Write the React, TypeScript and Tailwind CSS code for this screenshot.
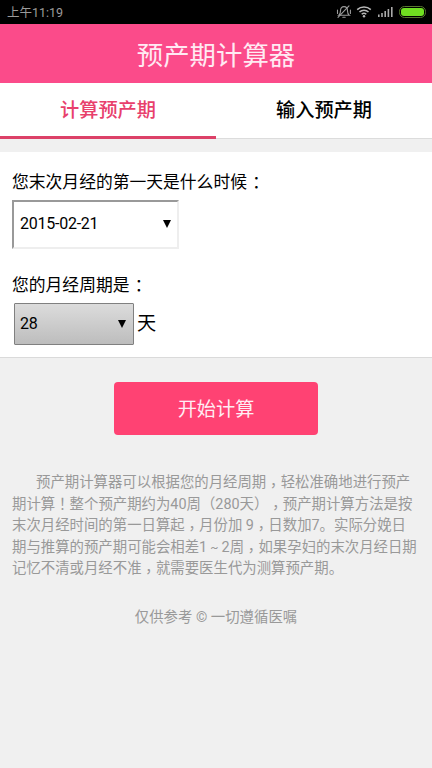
import React from "react";

// Full-width punctuation centred in its em box.
function P({ children }: { children: React.ReactNode }) {
  return <span lang="zh-TW" className="font-['Noto_Sans_CJK_TC',sans-serif] leading-none">{children}</span>;
}

// Commas sit nearer the baseline than the font draws them.
function Low({ children }: { children: React.ReactNode }) {
  return <span lang="zh-TW" className="relative top-1 font-['Noto_Sans_CJK_TC',sans-serif] leading-none">{children}</span>;
}

function Colon() {
  return <span lang="zh-TW" className="relative left-px top-px font-['Noto_Sans_CJK_TC',sans-serif] leading-none">：</span>;
}

function StatusIcons() {
  return (
    <svg width="96" height="24" viewBox="0 0 96 24" fill="none" className="shrink-0">
      <g stroke="#9b9b9b" strokeWidth="1.1" strokeLinecap="round">
        <path d="M2.800 15.300c1.300-.9 1.700-1.900 1.700-4.500C4.500 8 5.900 6.600 8 6.600s3.500 1.400 3.500 4.200c0 2.600.4 3.600 1.700 4.500H2.800Z" />
        <path d="M6.800 17.300h2.400M2 17.300 13 5.800M1.500 10v3.400M14.400 10v3.400" />
      </g>
      <g stroke="#b8b8b8" strokeWidth="1.5">
        <path d="M21.200 9.600a10 10 0 0 1 13.600 0" />
        <path d="M23.500 12a6.500 6.500 0 0 1 9 0" />
        <path d="M25.700 14.300a3.400 3.400 0 0 1 4.600 0" />
      </g>
      <circle cx="28" cy="16.200" r="1.200" fill="#b8b8b8" />
      <path d="M42.800 14.500v2.500M46 13v4M49.200 11v6M52.400 9v8M55.800 7v10" stroke="#aaa" strokeWidth="1.600" />
      <rect x="63.500" y="6.500" width="26" height="11" rx="5" stroke="#58792f" />
      <rect x="65" y="8" width="23" height="8" rx="3" fill="#70df20" />
    </svg>
  );
}

function Arrow() {
  return (
    <svg width="8" height="8" viewBox="0 0 8 8" className="mb-px">
      <path d="M0 0h8L4 8Z" fill="#000" />
    </svg>
  );
}

export default function App() {
  return (
    <div lang="zh-CN" className="flex h-[768px] w-[432px] flex-col overflow-hidden bg-[#f0f0f0] font-[Roboto,'Noto_Sans_CJK_SC',sans-serif] text-black [text-spacing-trim:space-all]">
      <div className="flex h-6 shrink-0 items-center justify-between bg-black pl-[7px]">
        <span className="pt-px text-[12.5px] leading-6 text-[#9b9b9b]">上午11:19</span>
        <StatusIcons />
      </div>
      <header className="flex h-[59px] shrink-0 items-center justify-center bg-[#fb4b8a]">
        <h1 className="pt-[5px] text-[26.4px] leading-[54px] text-[#ffeaf3]">预产期计算器</h1>
      </header>
      <nav className="grid h-14 shrink-0 grid-cols-2 bg-white text-center text-[19.2px] font-medium leading-[56px]">
        <div className="h-14 border-b-[3px] border-[#dc4168] text-[#e8406c]">计算预产期</div>
        <div className="h-14 border-b border-[#dcdcdc]">输入预产期</div>
      </nav>
      <main className="flex flex-col">
        <section className="mt-[13px] flex h-[206px] flex-col border-b border-[#dadada] bg-white px-3">
          <label className="mt-[18px] h-[30px] text-[16.8px] leading-[25px]">您末次月经的第一天是什么时候<Colon /></label>
          <div className="flex h-[49px] w-[167px] items-center justify-between border-2 border-b-[#eee] border-l-[#999] border-r-[#eee] border-t-[#999] pb-px pl-[6px] pr-[6px] text-[16px] tracking-[-0.25px]">
            <span className="leading-6">2015-02-21</span>
            <Arrow />
          </div>
          <label className="mt-6 h-[30px] text-[16.8px] leading-[25px]">您的月经周期是<Colon /></label>
          <div className="ml-0.5 flex items-center gap-[3px]">
            <div className="flex h-[42px] w-[120px] items-center justify-between rounded-[1px] border border-[#808080] bg-linear-to-b from-[#dcdcdc] to-[#bdbdbd] pl-[5px] pr-[7px] text-[16px]">
              <span className="tracking-[-0.25px]">28</span>
              <Arrow />
            </div>
            <span className="text-[19.2px] leading-6">天</span>
          </div>
        </section>
        <button className="mt-6 h-[53px] w-[204px] self-center rounded-[4px] bg-[#ff4273] pt-[3px] text-[19.2px] leading-[50px] text-[#ffedf3]">开始计算</button>
        <p className="mt-[37px] whitespace-nowrap px-3 text-[14.4px] leading-[21.6px] text-[#999]">
          <span className="block h-[21.6px] pl-6">预产期计算器可以根据您的月经周期<Low>，</Low>轻松准确地进行预产</span>
          <span className="block h-[21.6px]">期计算<P>！</P>整个预产期约为40周<P>（</P>280天<P>）</P><Low>，</Low>预产期计算方法是按</span>
          <span className="block h-[21.6px]">末次月经时间的第一日算起<Low>，</Low>月份加 9<Low>，</Low>日数加7。实际分娩日</span>
          <span className="block h-[21.6px]">期与推算的预产期可能会相差1<span className="inline-block w-[14.4px] text-center text-[12px] leading-none">~</span>2周<Low>，</Low>如果孕妇的末次月经日期</span>
          <span className="block h-[21.6px]">记忆不清或月经不准<Low>，</Low>就需要医生代为测算预产期。</span>
        </p>
        <p className="mt-[27px] text-center text-[14.4px] leading-[21.6px] text-[#999]">仅供参考 © 一切遵循医嘱</p>
      </main>
    </div>
  );
}
